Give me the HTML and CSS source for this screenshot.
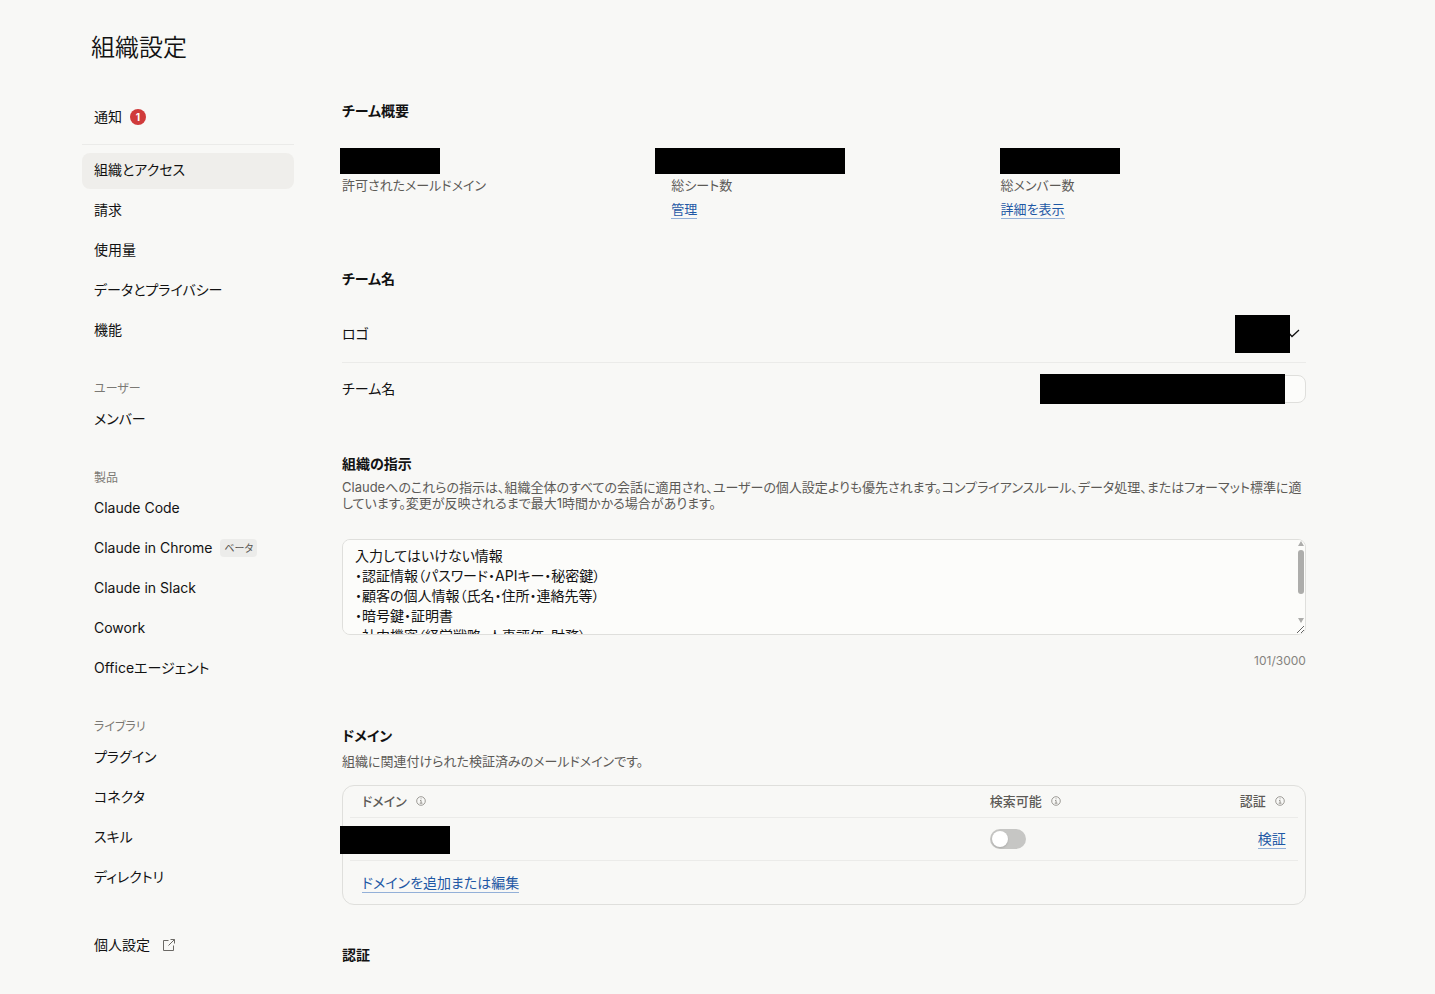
FILE: index.html
```html
<!DOCTYPE html>
<html lang="ja">
<head>
<meta charset="utf-8">
<meta name="viewport" content="width=device-width, initial-scale=1">
<title>組織設定</title>
<link rel="stylesheet" href="styles.css">
</head>
<body>
<div class="page">
  <h1 class="page-title">組織設定</h1>
  <div class="layout">
    <nav class="sidebar" aria-label="組織設定">
      <a class="nav-item" href="#">通知 <span class="count">1</span></a>
      <div class="nav-group nav-group-first">
        <a class="nav-item active" href="#" aria-current="page">組織とアクセス</a>
        <a class="nav-item" href="#">請求</a>
        <a class="nav-item" href="#">使用量</a>
        <a class="nav-item" href="#">データとプライバシー</a>
        <a class="nav-item" href="#">機能</a>
      </div>
      <div class="nav-group">
        <h2 class="nav-label">ユーザー</h2>
        <a class="nav-item" href="#">メンバー</a>
      </div>
      <div class="nav-group">
        <h2 class="nav-label">製品</h2>
        <a class="nav-item" href="#">Claude Code</a>
        <a class="nav-item" href="#">Claude in Chrome <span class="tag">ベータ</span></a>
        <a class="nav-item" href="#">Claude in Slack</a>
        <a class="nav-item" href="#">Cowork</a>
        <a class="nav-item" href="#">Officeエージェント</a>
      </div>
      <div class="nav-group">
        <h2 class="nav-label">ライブラリ</h2>
        <a class="nav-item" href="#">プラグイン</a>
        <a class="nav-item" href="#">コネクタ</a>
        <a class="nav-item" href="#">スキル</a>
        <a class="nav-item" href="#">ディレクトリ</a>
      </div>
      <div class="nav-group nav-group-last">
        <a class="nav-item nav-external" href="#">個人設定
          <svg width="14" height="14" viewBox="0 0 14 14" fill="none" stroke="currentColor" aria-hidden="true"><path d="M6.5 2.5H1.5v10h10v-5M8.5 1.5h4v4M12.5 1.5l-6 6"/></svg>
        </a>
      </div>
    </nav>

    <main class="content">
      <section class="overview">
        <h2 class="heading">チーム概要</h2>
        <dl class="stats">
          <div class="stat">
            <dd class="stat-value"><span class="mask mask-mail"></span></dd>
            <dt class="stat-label">許可されたメールドメイン</dt>
          </div>
          <div class="stat">
            <dd class="stat-value"><span class="mask mask-seats"></span></dd>
            <dt class="stat-label">総シート数</dt>
            <dd class="stat-link"><a class="link" href="#">管理</a></dd>
          </div>
          <div class="stat">
            <dd class="stat-value"><span class="mask mask-members"></span></dd>
            <dt class="stat-label">総メンバー数</dt>
            <dd class="stat-link"><a class="link" href="#">詳細を表示</a></dd>
          </div>
        </dl>
      </section>

      <section class="team">
        <h2 class="heading">チーム名</h2>
        <div class="row row-logo">
          <span id="logo-label">ロゴ</span>
          <button class="logo-button" type="button" aria-labelledby="logo-label">
            <svg width="16" height="16" viewBox="0 0 16 16" fill="none" stroke="currentColor" stroke-width="1.3" aria-hidden="true"><path d="M2 4l6 6.5L15 4"/></svg>
            <span class="mask mask-logo"></span>
          </button>
        </div>
        <div class="row row-name">
          <label for="team-name">チーム名</label>
          <span class="field">
            <input class="text-input" id="team-name" type="text">
            <span class="mask mask-name"></span>
          </span>
        </div>
      </section>

      <section class="instructions">
        <h2 class="heading"><label for="instructions">組織の指示</label></h2>
        <p class="description">Claudeへのこれらの指示は、組織全体のすべての会話に適用され、ユーザーの個人設定よりも優先されます。コンプライアンスルール、データ処理、またはフォーマット標準に適しています。変更が反映されるまで最大1時間かかる場合があります。</p>
        <div class="text-area-wrap">
          <textarea class="text-area" id="instructions">入力してはいけない情報
・認証情報（パスワード・APIキー・秘密鍵）
・顧客の個人情報（氏名・住所・連絡先等）
・暗号鍵・証明書
・社内機密（経営戦略・人事評価・財務）
</textarea>
          <svg class="scroll-indicator" width="6" height="82" viewBox="0 0 6 82" fill="#adadab" aria-hidden="true"><path d="M3 0l3 5H0z"/><rect y="9" width="6" height="44" rx="3"/><path d="M3 82l3-5H0z"/></svg>
        </div>
        <p class="counter">101/3000</p>
      </section>

      <section class="domains">
        <h2 class="heading">ドメイン</h2>
        <p class="description">組織に関連付けられた検証済みのメールドメインです。</p>
        <div class="card">
          <table class="domain-table">
            <thead>
              <tr>
                <th class="col-domain" scope="col"><span class="th-label">ドメイン <svg class="info" viewBox="0 0 10 10" fill="none" stroke="currentColor" stroke-width="0.8" aria-hidden="true"><circle cx="5" cy="5" r="4.3"/><path d="M4 4.5h1.1v2.7M3.7 7.2h2.8M4.6 2.8h.9"/></svg></span></th>
                <th class="col-search" scope="col"><span class="th-label">検索可能 <svg class="info" viewBox="0 0 10 10" fill="none" stroke="currentColor" stroke-width="0.8" aria-hidden="true"><circle cx="5" cy="5" r="4.3"/><path d="M4 4.5h1.1v2.7M3.7 7.2h2.8M4.6 2.8h.9"/></svg></span></th>
                <th class="col-verify" scope="col"><span class="th-label">認証 <svg class="info" viewBox="0 0 10 10" fill="none" stroke="currentColor" stroke-width="0.8" aria-hidden="true"><circle cx="5" cy="5" r="4.3"/><path d="M4 4.5h1.1v2.7M3.7 7.2h2.8M4.6 2.8h.9"/></svg></span></th>
              </tr>
            </thead>
            <tbody>
              <tr>
                <td class="col-domain"><span class="mask mask-domain"></span></td>
                <td class="col-search"><input class="toggle" type="checkbox" role="switch" aria-label="検索可能"></td>
                <td class="col-verify"><a class="link" href="#">検証</a></td>
              </tr>
              <tr>
                <td class="col-domain" colspan="3"><a class="link" href="#">ドメインを追加または編集</a></td>
              </tr>
            </tbody>
          </table>
        </div>
      </section>

      <section class="auth">
        <h2 class="heading">認証</h2>
      </section>
    </main>
  </div>
</div>
</body>
</html>
```

FILE: styles.css
```css
* { box-sizing: border-box; }

body {
  margin: 0;
  background: #f8f8f6;
  color: #121212;
  font-family: Inter, "Noto Sans CJK JP", sans-serif;
  font-size: 14px;
  line-height: 20px;
  font-feature-settings: "palt";
}

h1, h2, p, dl, dd { margin: 0; }
a { color: inherit; text-decoration: none; }

.page { padding: 32px 9% 29px 82px; }

.page-title {
  padding-left: 9px;
  font-size: 24px;
  font-weight: 350;
  line-height: 32px;
}

.layout {
  display: flex;
  align-items: flex-start;
  gap: 48px;
  padding-top: 35px;
}

/* Sidebar */
.sidebar { flex: 0 0 212px; }

.nav-item {
  display: flex;
  align-items: center;
  gap: 8px;
  height: 36px;
  padding: 0 12px;
  border-radius: 8px;
}

.nav-group .nav-item { padding-bottom: 2px; }
.nav-item.active { background: #efeeeb; }
.nav-item + .nav-item { margin-top: 4px; }
.nav-group { margin-top: 30px; }
.nav-group.nav-group-last { margin-top: 32px; }

.nav-group.nav-group-first {
  margin-top: 9px;
  padding-top: 8px;
  border-top: 1px solid #ebebe9;
}

.nav-label {
  padding: 0 12px;
  margin-bottom: 3px;
  color: #7b7974;
  font-size: 12px;
  font-weight: 400;
}

.nav-external { gap: 12px; }
.nav-external svg { color: #6b6965; }

.count {
  width: 16px;
  height: 16px;
  border-radius: 50%;
  background: #d03b3b;
  color: #fff;
  font-size: 10px;
  font-weight: 700;
  line-height: 16px;
  text-align: center;
}

.tag {
  padding: 0 4px;
  border-radius: 4px;
  background: #ececea;
  color: #55534f;
  font-size: 10px;
  line-height: 18px;
}

/* Main column */
.content {
  flex: 1;
  min-width: 0;
  padding-top: 2px;
}

.heading {
  font-size: 14px;
  font-weight: 700;
}

.description {
  color: #5c5a56;
  font-size: 13px;
  line-height: 16px;
}

.link {
  border-bottom: 1px solid #93b0d8;
  color: #1f58a5;
}

.mask {
  position: absolute;
  background: #000;
}

.stats {
  display: grid;
  grid-template-columns: repeat(3, 1fr);
  gap: 24px;
  padding-top: 27px;
  font-size: 13px;
}

.stat {
  display: flex;
  flex-direction: column;
}

.stat-value {
  position: relative;
  height: 27px;
}

.stat-label { color: #5c5a56; }
.stat-link { padding-top: 4px; line-height: 20px; }
.stat-link .link { display: inline-block; line-height: 17px; }

.mask-mail { top: 0; left: -2px; width: 100px; height: 26px; }
.mask-seats { top: 0; left: -16px; width: 190px; height: 26px; }
.mask-members { top: 0; left: -1px; width: 120px; height: 26px; }

.team { margin-top: 50px; }

.row {
  display: flex;
  align-items: center;
  justify-content: space-between;
}

.row-logo {
  height: 57px;
  margin-top: 17px;
  border-bottom: 1px solid #ebebe9;
}

.row-name { height: 52px; }

.logo-button {
  position: relative;
  display: flex;
  align-items: center;
  justify-content: flex-end;
  width: 76px;
  height: 38px;
  padding: 0 6px;
  border: 0;
  background: none;
  color: #121212;
}

.mask-logo { top: 0; left: 5px; width: 55px; height: 38px; }

.field { position: relative; }

.text-input {
  display: block;
  width: 264px;
  height: 28px;
  padding: 0 12px;
  border: 1px solid #dfdfdc;
  border-radius: 8px;
  background: #fcfcfa;
  color: inherit;
  font: inherit;
}

.mask-name { top: -1px; right: 21px; width: 245px; height: 30px; }

.instructions { margin-top: 39px; }
.instructions .description { padding-top: 5px; }

.text-area-wrap {
  position: relative;
  margin-top: 28px;
}

.text-area {
  display: block;
  width: 100%;
  height: 96px;
  padding: 6px 20px 6px 12px;
  border: 1px solid #dfdfdc;
  border-radius: 8px;
  background: #fcfcfa;
  color: inherit;
  font: inherit;
  font-feature-settings: inherit;
  resize: vertical;
  overflow-y: scroll;
  scrollbar-width: none;
}

.scroll-indicator {
  position: absolute;
  top: 2px;
  right: 2px;
  pointer-events: none;
}

.counter {
  padding-top: 16px;
  color: #85837e;
  font-size: 12px;
  text-align: right;
}

.domains { margin-top: 55px; }
.domains .description { padding-top: 7px; }

.card {
  margin-top: 16px;
  padding: 0 7px;
  border: 1px solid #dfdfdc;
  border-radius: 12px;
}

.domain-table {
  width: 100%;
  border-collapse: separate;
  border-spacing: 0;
  table-layout: fixed;
}

.domain-table th,
.domain-table td {
  position: relative;
  padding: 0 12px;
  text-align: left;
}

.domain-table th {
  height: 32px;
  padding-bottom: 2px;
  border-bottom: 1px solid #ebebe9;
  color: #5c5a56;
  font-size: 13px;
  font-weight: 500;
}

.domain-table td { height: 43px; }
.domain-table tbody tr:first-child td { border-bottom: 1px solid #ebebe9; }
.domain-table th.col-search { width: 200px; }
.domain-table th.col-verify { width: 120px; }
.domain-table .col-verify { text-align: right; }

.th-label {
  display: inline-flex;
  align-items: center;
  gap: 9px;
}

.info {
  width: 10px;
  height: 10px;
  margin-right: 1px;
  color: #85837e;
}

.domain-table .link { display: inline-block; line-height: 18px; }

.domain-table td .mask-domain { top: 8px; left: -10px; width: 110px; height: 28px; }

.toggle {
  display: block;
  width: 36px;
  height: 20px;
  margin: 0;
  border-radius: 10px;
  appearance: none;
  background: #c6c6c4;
}

.toggle::before {
  content: "";
  display: block;
  width: 16px;
  height: 16px;
  margin: 2px;
  border-radius: 50%;
  background: #fff;
  box-shadow: 0 1px 2px rgba(0, 0, 0, 0.15);
}

.toggle:checked { background: #1f58a5; }
.toggle:checked::before { margin-left: 18px; }

.auth { margin-top: 40px; }
```
